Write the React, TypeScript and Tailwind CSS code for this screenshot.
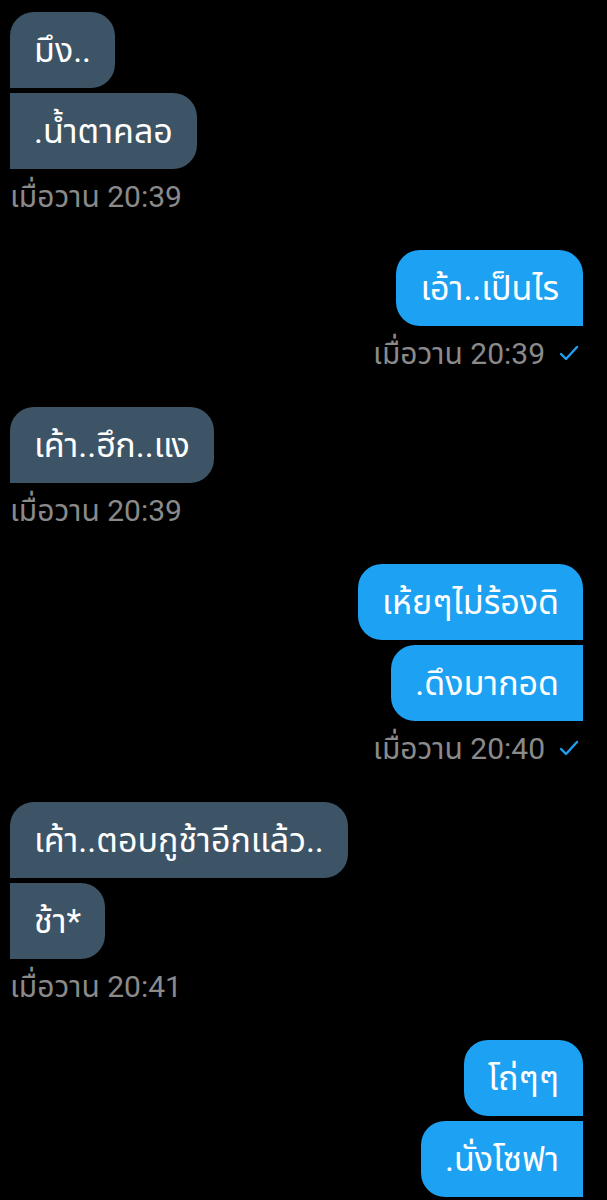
import React from "react";

type Msg = {
  side: "in" | "out";
  texts: string[];
  time?: string;
};

const groups: Msg[] = [
  { side: "in", texts: ["มึง..", ".น้ำตาคลอ"], time: "เมื่อวาน 20:39" },
  { side: "out", texts: ["เอ้า..เป็นไร"], time: "เมื่อวาน 20:39" },
  { side: "in", texts: ["เค้า..ฮึก..แง"], time: "เมื่อวาน 20:39" },
  { side: "out", texts: ["เห้ยๆไม่ร้องดิ", ".ดึงมากอด"], time: "เมื่อวาน 20:40" },
  { side: "in", texts: ["เค้า..ตอบกูช้าอีกแล้ว..", "ช้า*"], time: "เมื่อวาน 20:41" },
  { side: "out", texts: ["โถ่ๆๆ", ".นั่งโซฟา", "..."] },
];

const Check = () => (
  <svg width="20" height="16" viewBox="0 0 20 16" className="ml-[14px] mr-[4px]">
    <polyline points="2,9 7,14 18,2" fill="none" stroke="#1da1f2" strokeWidth="2.4" strokeLinecap="round" strokeLinejoin="round" />
  </svg>
);

const App = () => {
  return (
    <div
      className="h-[1200px] w-[607px] overflow-hidden bg-black pt-3"
      style={{ fontFamily: "Roboto, 'Noto Sans Thai', 'Noto Sans', sans-serif" }}
    >
      {groups.map((g, gi) => {
        const isIn = g.side === "in";
        return (
          <div key={gi} className={`flex flex-col ${isIn ? "items-start pl-[10px]" : "items-end pr-[24px]"} mb-[33px]`}>
            <div className={`flex flex-col gap-[5px] ${isIn ? "items-start" : "items-end"}`}>
              {g.texts.map((t, ti) => (
                <div
                  key={ti}
                  className={
                    isIn
                      ? `bg-[#3d5466] text-white text-[34px] leading-[40px] px-6 py-[18px] rounded-[24px] rounded-bl-none whitespace-nowrap ${ti > 0 ? "rounded-tl-none" : ""}`
                      : `bg-[#1da1f2] text-white text-[34px] leading-[40px] px-6 py-[18px] rounded-[24px] rounded-br-none whitespace-nowrap ${ti > 0 ? "rounded-tr-none" : ""}`
                  }
                >
                  {t}
                </div>
              ))}
            </div>
            {g.time && (
              <div className="mt-[6px] flex h-[42px] items-center text-[30px] text-[#8a8a8a]">
                {g.time}
                {!isIn && <Check />}
              </div>
            )}
          </div>
        );
      })}
    </div>
  );
};

export default App;
